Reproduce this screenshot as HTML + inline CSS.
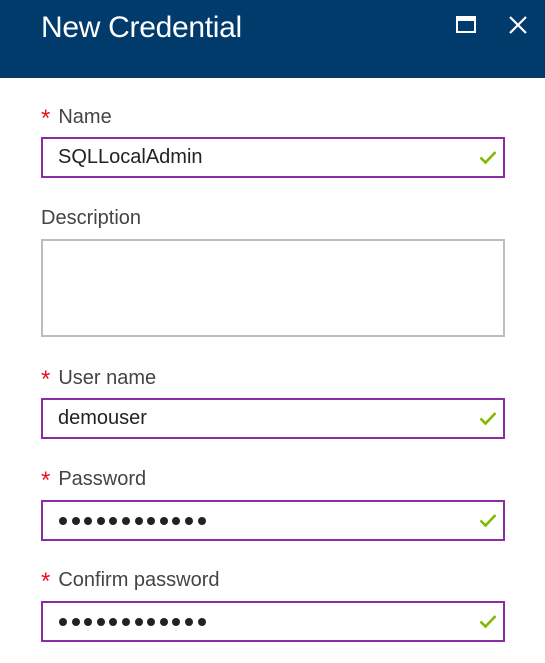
<!DOCTYPE html>
<html><head><style>
*{margin:0;padding:0;box-sizing:border-box}
body{width:545px;height:663px;background:#fff;font-family:"Liberation Sans",sans-serif;position:relative;overflow:hidden}
.hdr{position:absolute;left:0;top:0;width:545px;height:78px;background:#003b6c}
.title{position:absolute;left:41px;top:11px;font-size:30px;color:#fff;letter-spacing:-0.3px}
.lbl{position:absolute;left:41px;font-size:20px;color:#444}
.lbl b{color:#e81123;font-weight:normal;font-size:24px;margin-right:8px;vertical-align:-3px}
.box{position:absolute;left:41px;width:464px;height:41px;border:2px solid #8a2da5}
.box .t{position:absolute;left:15px;top:7px;font-size:20px;color:#222}
.ck{position:absolute;right:6px;top:11px}
.dots{position:absolute;left:16px;top:15px;display:flex;gap:4.6px}
.dots i{width:8px;height:8px;border-radius:50%;background:#222;display:block}
</style></head><body>
<div class="hdr">
<div class="title">New Credential</div>
<svg style="position:absolute;left:456px;top:16px" width="22" height="18"><rect x="1" y="1" width="18" height="15" fill="none" stroke="#fff" stroke-width="2"/><rect x="1" y="1" width="18" height="4" fill="#fff"/></svg>
<svg style="position:absolute;left:509px;top:16px" width="18" height="18"><path d="M1 1L17 17M17 1L1 17" stroke="#fff" stroke-width="2.2"/></svg>
</div>

<div class="lbl" style="top:105px"><b>*</b>Name</div>
<div class="box" style="top:137px"><span class="t">SQLLocalAdmin</span>
<svg class="ck" width="18" height="15"><path d="M1.5 7.5L6.5 12.5L16.5 2" fill="none" stroke="#7fba00" stroke-width="2.6"/></svg></div>

<div class="lbl" style="top:207px">Description</div>
<div class="box" style="top:239px;height:98px;border-color:#bdbdbd"></div>

<div class="lbl" style="top:366px"><b>*</b>User name</div>
<div class="box" style="top:398px"><span class="t">demouser</span>
<svg class="ck" width="18" height="15"><path d="M1.5 7.5L6.5 12.5L16.5 2" fill="none" stroke="#7fba00" stroke-width="2.6"/></svg></div>

<div class="lbl" style="top:467px"><b>*</b>Password</div>
<div class="box" style="top:500px"><div class="dots"><i></i><i></i><i></i><i></i><i></i><i></i><i></i><i></i><i></i><i></i><i></i><i></i></div>
<svg class="ck" width="18" height="15"><path d="M1.5 7.5L6.5 12.5L16.5 2" fill="none" stroke="#7fba00" stroke-width="2.6"/></svg></div>

<div class="lbl" style="top:568px"><b>*</b>Confirm password</div>
<div class="box" style="top:601px"><div class="dots"><i></i><i></i><i></i><i></i><i></i><i></i><i></i><i></i><i></i><i></i><i></i><i></i></div>
<svg class="ck" width="18" height="15"><path d="M1.5 7.5L6.5 12.5L16.5 2" fill="none" stroke="#7fba00" stroke-width="2.6"/></svg></div>
</body></html>
